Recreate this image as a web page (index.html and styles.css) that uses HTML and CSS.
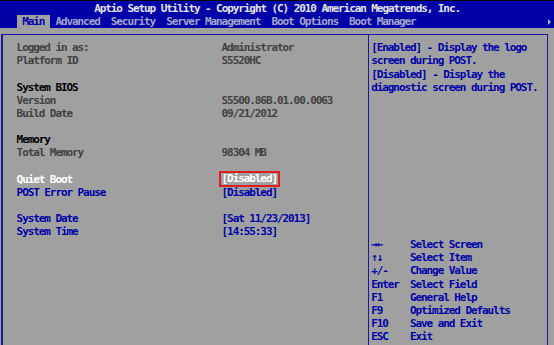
FILE: index.html
```html
<!DOCTYPE html>
<html lang="en">
<head>
    <meta charset="UTF-8">
    <title>Aptio Setup Utility</title>
    <link rel="stylesheet" href="styles.css">
</head>
<body>
    <div class="screen">
        <div class="header">
            <div class="title">Aptio Setup Utility - Copyright (C) 2010 American Megatrends, Inc.</div>
            <div class="tabs">
                <span class="tab active">Main</span>
                <span class="tab">Advanced</span>
                <span class="tab">Security</span>
                <span class="tab">Server Management</span>
                <span class="tab">Boot Options</span>
                <span class="tab">Boot Manager</span>
                <span class="more"></span>
            </div>
        </div>

        <div class="frame">
            <div class="main">
                <div class="row"><span class="label">Logged in as:</span><span class="value">Administrator</span></div>
                <div class="row"><span class="label">Platform ID</span><span class="value">S5520HC</span></div>
                <div class="blank"></div>
                <div class="row head">System BIOS</div>
                <div class="row"><span class="label">Version</span><span class="value">S5500.86B.01.00.0063</span></div>
                <div class="row"><span class="label">Build Date</span><span class="value">09/21/2012</span></div>
                <div class="blank"></div>
                <div class="row head">Memory</div>
                <div class="row"><span class="label">Total Memory</span><span class="value">98304 MB</span></div>
                <div class="blank"></div>
                <div class="row item selected"><span class="label">Quiet Boot</span><span class="value boxed">[Disabled]</span></div>
                <div class="row item"><span class="label">POST Error Pause</span><span class="value">[Disabled]</span></div>
                <div class="blank"></div>
                <div class="row item"><span class="label">System Date</span><span class="value">[Sat 11/23/2013]</span></div>
                <div class="row item"><span class="label">System Time</span><span class="value">[14:55:33]</span></div>
            </div>

            <div class="side">
                <div class="help">
                    <div class="row">[Enabled] - Display the logo</div>
                    <div class="row">screen during POST.</div>
                    <div class="row">[Disabled] - Display the</div>
                    <div class="row">diagnostic screen during POST.</div>
                </div>
                <div class="keys">
                    <div class="row"><span class="key">&rarr;&larr;</span>Select Screen</div>
                    <div class="row"><span class="key">&uarr;&darr;</span>Select Item</div>
                    <div class="row"><span class="key">+/-</span>Change Value</div>
                    <div class="row"><span class="key">Enter</span>Select Field</div>
                    <div class="row"><span class="key">F1</span>General Help</div>
                    <div class="row"><span class="key">F9</span>Optimized Defaults</div>
                    <div class="row"><span class="key">F10</span>Save and Exit</div>
                    <div class="row"><span class="key">ESC</span>Exit</div>
                </div>
            </div>
        </div>
    </div>
</body>
</html>
```

FILE: styles.css
```css
:root {
    --cw: 5.54px;
    --lh: 13.13px;
    --blue: #0000a8;
    --gray: #a0a0a0;
}
body {
    margin: 0;
    background-color: var(--gray);
    font-family: "DejaVu Sans Mono", monospace;
    font-size: 11px;
    font-weight: bold;
    letter-spacing: -1.08px;
    line-height: var(--lh);
    white-space: nowrap;
}
.screen {
    width: 554px;
    height: 345px;
    overflow: hidden;
    background-color: var(--gray);
}
.header {
    background-color: var(--blue);
    border-top: 1px solid #000;
    padding-top: 1px;
}
.title {
    height: var(--lh);
    padding-left: calc(var(--cw) * 17);
    color: #e4e4e4;
}
.tabs {
    display: flex;
    align-items: center;
    height: var(--lh);
    padding-left: calc(var(--cw) * 3);
}
.tab {
    padding: 0 var(--cw);
    color: #a4a4cc;
}
.tab.active {
    background-color: var(--gray);
    color: var(--blue);
}
.more {
    margin-left: auto;
    margin-right: 3px;
    width: 0;
    height: 0;
    border-left: 3px solid #b0b0c8;
    border-top: 3px solid transparent;
    border-bottom: 3px solid transparent;
}
.frame {
    display: flex;
    height: 311px;
    margin: 6px 0 0 1px;
    width: 547px;
    box-sizing: border-box;
    border: 1px solid #1818a0;
    border-left-width: 2px;
    border-bottom: none;
}
.main {
    flex: 0 0 365px;
    box-sizing: border-box;
    padding: 6px 0 0 13.6px;
    color: #424242;
}
.row {
    height: var(--lh);
}
.blank {
    height: var(--lh);
}
.label {
    display: inline-block;
    width: calc(var(--cw) * 37);
}
.head {
    color: #000;
}
.item {
    color: var(--blue);
}
.selected {
    color: #fff;
}
.boxed {
    display: inline-block;
    vertical-align: top;
    line-height: 10px;
    height: 10px;
    margin-top: 1.6px;
    outline: 2px solid #dc2020;
    outline-offset: 1px;
}
.side {
    flex: 1;
    border-left: 1px solid #1818a0;
    padding: 6px 0 0 2.2px;
    color: var(--blue);
}
.keys {
    margin-top: calc(var(--lh) * 11);
}
.key {
    display: inline-block;
    width: calc(var(--cw) * 7);
}
```
